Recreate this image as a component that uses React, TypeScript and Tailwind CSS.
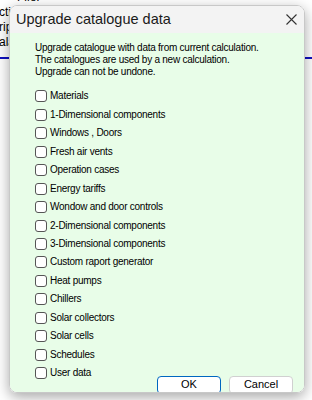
import React from "react";

const items = [
  "Materials",
  "1-Dimensional components",
  "Windows , Doors",
  "Fresh air vents",
  "Operation cases",
  "Energy tariffs",
  "Wondow and door controls",
  "2-Dimensional components",
  "3-Dimensional components",
  "Custom raport generator",
  "Heat pumps",
  "Chillers",
  "Solar collectors",
  "Solar cells",
  "Schedules",
  "User data",
];

export default function App() {
  return (
    <div className="relative w-[312px] h-[400px] bg-white overflow-hidden" style={{ fontFamily: '"Liberation Sans", Arial, sans-serif' }}>
      {/* window behind the dialog */}
      <div className="flex flex-col text-[12px] leading-[15px] text-black -ml-[1px] -mt-[10px] whitespace-nowrap">
        <span className="pl-[18px]">File:</span>
        <span>ction</span>
        <span>ription</span>
        <span>alation</span>
      </div>
      <div className="h-[2px] bg-[#1010c0] mt-[7px]" />

      {/* dialog */}
      <div className="absolute left-[9px] top-[5px] w-[296px] h-[388px] rounded-[8px] overflow-hidden border border-[#c8c8c8] shadow-[0_4px_14px_rgba(0,0,0,0.35)] flex flex-col">
        <div className="h-[27px] bg-[#f3f3f3] flex items-center justify-between pl-[6px] pr-[7px] shrink-0">
          <span className="text-[14.5px] text-[#1a1a1a] whitespace-nowrap">
            Upgrade catalogue data
          </span>
          <svg width="11" height="11" viewBox="0 0 11 11">
            <path d="M0.5 0.5L10.5 10.5M10.5 0.5L0.5 10.5" stroke="#333" strokeWidth="1.1" />
          </svg>
        </div>
        <div className="flex-1 bg-[#e8fde8] flex flex-col pl-[25px] pr-[11px] pt-[9px] pb-[12px] text-[10px] tracking-[-0.25px] text-black whitespace-nowrap">
          <div className="leading-[12px]">
            <p>Upgrade catalogue with data from current calculation.</p>
            <p>The catalogues are used by a new calculation.</p>
            <p>Upgrade can not be undone.</p>
          </div>
          <div className="flex justify-between items-end mt-[9px]">
            <div className="flex flex-col flex-1 min-w-0">
              {items.map((t) => (
                <label key={t} className="flex items-center h-[18.47px] gap-[3px]">
                  <span className="w-[12px] h-[12px] rounded-[3px] border border-[#555] bg-white shrink-0" />
                  <span className="leading-[12px]">{t}</span>
                </label>
              ))}
            </div>
            <div className="flex gap-[8px] -mb-[11px] tracking-normal shrink-0">
              <button className="w-[64px] h-[18px] rounded-[4px] bg-white border border-[#0067c0] text-[11px] leading-none">OK</button>
              <button className="w-[64px] h-[18px] rounded-[4px] bg-white border border-[#d0d0d0] text-[11px] leading-none">Cancel</button>
            </div>
          </div>
        </div>
      </div>
    </div>
  );
}
